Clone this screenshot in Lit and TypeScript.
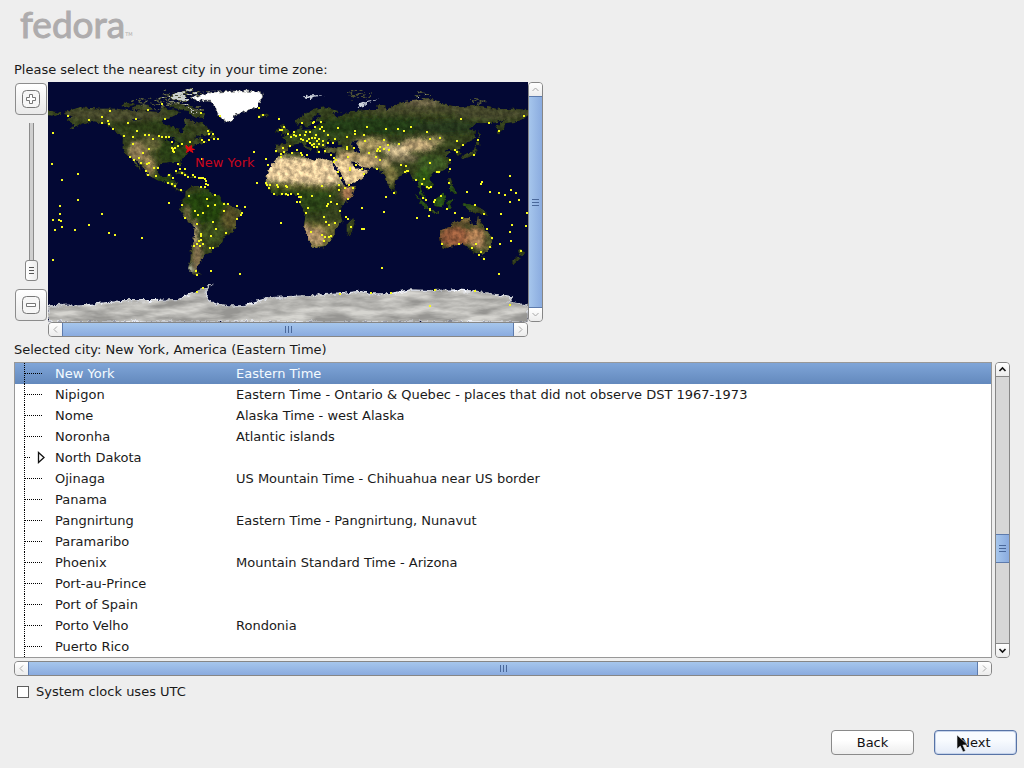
import { LitElement, html, svg, css } from "lit";
import { customElement, property, state } from "lit/decorators.js";
import { classMap } from "lit/directives/class-map.js";

/* Coastlines as "longitude,latitude" rings. */
const LAND: string[] = [
  "-168,66 -166,68 -156,71 -141,70 -128,70 -115,68 -108,68 -96,67.5 -94,72 -90,69 -85,69.5 -81,67 -87,64 -94,61 -94,58.5 -88,56.5 -82,55 -82,52 -79,51.5 -79,54.5 -77,57 -78,62 -73,62 -69,59 -65,60 -62,57 -56,52.5 -60,50 -66,50 -71,47 -65,49 -64,46 -60,46 -66,43.5 -70,43.5 -70,41.5 -74,40.5 -76,37 -76,35 -81,31.5 -80,26 -82,27 -83,30 -89,30 -94,29.5 -97,27.5 -97.5,22 -95,18.5 -91,18.5 -90,21 -87,21.5 -88,16 -83.5,15 -84,11 -81,9 -77.5,8.5 -80,7.5 -83,8.5 -86,11 -88,13 -94,16 -97,16 -105,20 -106,23 -110,27 -113,31 -115,31.5 -112,27 -109.5,23 -112,25 -115,29 -117.5,33.5 -121,35 -124,40 -124,47 -123,49 -128,51 -131,55 -136,58.5 -145,60.5 -151,59.5 -154,59 -158,56.5 -164,54.5 -160,58 -162,59 -166,62 -161,64.5",
  "-62,66 -64,63 -72,64.5 -74,68 -88,71 -88,73.5 -80,73.5 -72,71",
  "-117,70 -114,73 -105,73 -101,69.5 -108,68.5 -115,69",
  "-125,72 -122,74.5 -115,73 -122,71",
  "-59,48 -56,51.5 -53,47",
  "-85,22 -80,23.5 -74,20 -78,20",
  "-74,18 -72,20 -68.5,18.5",
  "-24,65.5 -16,66.3 -14,65 -19,63.4 -22,64",
  "-77,8 -72,12 -62,10.5 -57,6 -51,4.5 -50,0 -44,-2.5 -35,-6 -35,-9 -39,-13 -39,-18 -41,-22 -48,-26 -49,-29 -53,-34 -58,-35 -57,-38 -62,-39 -65,-42.5 -67,-46 -69,-51 -68,-53 -65,-55 -71,-54.5 -75,-50 -73,-42 -73,-37 -71,-30 -70,-18 -76,-14 -81,-6 -80,-3 -80,1 -77,4",
  "-6,35.8 10,37.3 11,34 20,31 23,33 33,31 35,27 37,21 43,11.5 51,12 48,4 41,-2 39,-7 41,-15 35,-20 35,-24 32,-29 27,-34 19,-34.5 15,-27 12,-18 13,-11 9,-1 9,4 4,6.5 -8,4.5 -13,8 -17,14 -16,20 -13,27.5 -9,32",
  "49,-12 50,-16 47,-25 44,-24 44,-17",
  "-9,37 -9,43 -1.5,43.5 -1,46 -4.5,48.5 1.5,50.5 5,53 8,54 8,57 10.5,57.5 11,54 20,54.5 22,57.5 24,59 30,60 22,60.5 21.5,63 25,65 22,66 17,61.5 18,59.5 16,56.5 13,55.5 11,59 7,58 5,61 13,66 20,70 28,71 41,67 33,66.5 38,64 44,66.5 46,68 60,69 68,69 67,72.5 73,72.5 73,68 78,72 87,75 100,76.5 105,78 113,75.5 114,73.5 130,71 140,72.5 160,69.5 170,70 180,69 180,65 177,62.5 170,60 163,59 162,55 157,51 156,57 163,62 155,59.5 142,59 135,54.5 141,53 140,48 132,43 128,40 129.5,36 126.5,34.5 126,38 121,39 118,39 122,37 119,35 122,31 120,26 115,22.5 108,21.5 106,18 109,12 105,9 101,13 99.5,10 103,4 103.5,1.3 100,5 98,10 98,16 94,16 91,22.5 87,21.5 80,15 80,10 77.5,8 73,17 72,21 67,25 57,26 54,27 50,30 48,30 51,25 56,26 60,22.5 55,17 45,13 43,14 39,21 35,28 34,31 36,36.5 27,37 27,40.5 41,41.5 37,45 39,47 34,44.5 31,46.5 28,43 29,41 23,40.5 24,38 22,36.5 19.5,41 13,45.5 13,43.5 18.5,40 16,38 10,44 3.5,43 -0.5,39 -2,37",
  "-180,69 -172,67 -170,66 -174,64.5 -180,65",
  "-5,50 1.5,51.5 0,53.5 -2,56 -3,58.5 -6,57.5 -4.5,54 -5,52",
  "-10,52 -6,52.5 -6,55 -9.5,54",
  "80,9.5 82,7 80,6",
  "130,32 136,34 140.5,35.5 142,40 140,41 139,38 132,35.5",
  "140,42 145,43.5 142,45.5",
  "142,46 144,50 143,54",
  "95,5.5 104,-2 106,-6 102,-4",
  "109,1 117,7 118.5,4 116,-4 110,-3",
  "105,-6 114,-7.5 114,-9 108,-7.8",
  "119,-5 120,1 125,1.5 121,-1 123,-5",
  "131,-1 138,-2 147,-6 150,-10.5 143,-8 138,-8 133,-4",
  "120,18 122,18 124,12 126,7 122,7.5 121,14",
  "120,23 122,25 121,22",
  "114,-22 114,-26 115.5,-34 118,-35 124,-33 131,-31.5 136,-35 140,-38 146,-39 150,-37.5 153,-32 153,-27 149,-21 146,-18.5 145,-15 142.5,-11 141,-17 139,-17.5 136,-15 136.5,-12 131,-12 129,-15 125,-14 122,-18",
  "145,-41 148,-41 147,-43.5",
  "173,-35 178,-38 175,-41.5 174,-39",
  "172,-41 174,-42 169,-46.5 167,-46",
];

const INLAND_WATER: string[] = [
  "47,45 53,46.5 51,44 53,41 54,37 50,37.5 49,40",
  "-92,47 -86,48.5 -84,46 -87,42 -88,45",
  "-84,45 -80,44 -82,43",
  "-83,42 -76,43.5 -79,42.5",
  "-118,62 -109,62.5 -115,61",
  "32,0 34,0 33,-2.5",
];

const ICE: string[] = [
  "-66,80 -58,82.3 -35,83.5 -20,82.5 -19,79 -21,75 -23,71 -32,68 -40,65 -43,60 -48,61 -53,66 -54,70 -58,75.5 -68,76 -73,78",
];

/* Rocky arctic islands with broken snow cover. */
const ARCTIC: string[] = [
  "-90,77 -88,80 -75,83 -62,82.5 -76,79 -80,76.5",
  "-95,75.5 -80,76 -80,74.5 -92,74.5",
  "-117,75.5 -106,76.5 -106,75",
  "-97,78 -92,81 -87,79",
  "-101,73 -96,74 -96,72",
  "-80,73 -70,71 -66,68 -72,69",
  "95,79 100,81 105,79",
  "137,76 150,75.5 140,75",
  "46,80.5 62,81 55,80",
];

const SNOWY_ISLES: string[] = [
  "52,71 54,73.5 60,76 69,77 60,75 56,72",
  "11,79 16,80 27,80.3 20,79 17,77",
];

const ANTARCTICA =
  "-180,-78 -150,-77 -130,-75 -126,-74 -100,-74 -82,-73 -75,-70 -68,-67 -58,-63 -62,-68 -60,-73 -56,-76 -45,-78 -34,-78 -25,-75 -14,-72 0,-71 20,-70 38,-69 54,-67 62,-69 75,-69 92,-66 108,-66.5 125,-66 142,-67 160,-70 168,-71 165,-75 180,-77.5 180,-90 -180,-90";

/* Vegetation and desert areas drawn as rings. */
const REGIONS: [string, string][] = [
  ["#e4c899", "-18,16 -17,30 -8,34 0,34 12,33 22,34 36,32 38,20 40,15 30,13 15,14 0,15"],
  ["#e3c693", "34,32 42,34 48,31 62,24 56,14 42,12"],
  ["#67672f", "-18,14 0,14 15,13 30,12 38,13 36,9 15,10 -15,11"],
  ["#2a4212", "-16,10 15,9 34,8 31,-4 26,-8 12,-7 8,3 -10,3"],
  ["#6b6733", "10,-14 22,-16 36,-15 42,-20 30,-36 14,-36"],
];

/* Softer patches: cx, cy, rx, ry (degrees), colour. */
const BIOMES: [number, number, number, number, string][] = [
  [-130, 66, 40, 5, "#45462a"],
  [-80, 60, 12, 5, "#43452a"],
  [-100, 56, 30, 5, "#2c3a18"],
  [-85, 38, 12, 11, "#2c4114"],
  [-112, 38, 8, 8, "#8d7a52"],
  [-104, 27, 4, 7, "#a08859"],
  [-103, 44, 7, 6, "#606035"],
  [-92, 16, 8, 5, "#2c4816"],
  [-62, -4, 18, 12, "#203f0e"],
  [-43, -12, 7, 9, "#544f25"],
  [-57, -24, 8, 7, "#3b4d1a"],
  [-68, -42, 4, 12, "#7c6a48"],
  [-70, -24, 2, 10, "#b9a276"],
  [-74, -51, 2, 4, "#b9b9b0"],
  [-76, -10, 2, 8, "#6f6540"],
  [45, 7, 5, 6, "#a5764f"],
  [22, -26, 6, 7, "#a98d63"],
  [14, -24, 3, 7, "#b79470"],
  [46, 35, 9, 3, "#b59a69"],
  [34, 39, 7, 2, "#6c6a3e"],
  [-4, 40, 4, 2, "#6d6235"],
  [60, 31, 9, 6, "#b59c6e"],
  [62, 43, 14, 5, "#a6945f"],
  [82, 39, 11, 4, "#d0bb8f"],
  [86, 33, 12, 3, "#7d7252"],
  [98, 43, 13, 5, "#b8a073"],
  [110, 46, 7, 3, "#968b5a"],
  [72, 29, 5, 4, "#a39263"],
  [77, 20, 5, 7, "#77713d"],
  [108, 29, 11, 6, "#3a5720"],
  [102, 17, 7, 8, "#2f5418"],
  [20, 50, 26, 6, "#33471a"],
  [65, 57, 50, 6, "#243a12"],
  [120, 56, 26, 5, "#28381a"],
  [105, 70, 50, 4, "#474a2b"],
  [100, 75, 14, 2, "#776b4f"],
  [155, 66, 30, 4, "#45462a"],
  [115, 3, 30, 10, "#285015"],
  [125, -26, 12, 8, "#935a3a"],
  [141, -26, 7, 7, "#a87950"],
  [143, -31, 4, 4, "#b98d62"],
  [149, -30, 3, 12, "#5d5c33"],
  [134, -14, 12, 3, "#6e5a34"],
];

/* City markers, in map pixels (480 x 240). */
const CITIES =
  "20,34 5,51 54,35 62,29 60,39 54,41 61,42 41,38 65,47 80,41 88,37 100,28 114,22 117,37 76,54 89,49 85,55 97,53 101,53 105,57 111,54 114,55 118,55 85,62 101,67 95,71 82,75 86,78 91,76 93,81 99,82 101,81 106,86 110,86 98,89 100,93 108,94 121,93 120,101 121,121 4,82 14,98 30,92 30,118 12,124 " +
  "153,31 172,34 211,26 211,35 215,33 231,37 121,55 124,60 160,49 161,52 165,52 166,57 170,57 161,58 154,58 156,60 142,60 134,62 130,64 124,66 125,67 126,70 125,69 127,66 154,77 206,70 218,77 220,83 130,82 132,87 137,87 128,89 125,96 134,91 137,93 140,95 145,93 147,95 151,96 153,96 155,96 157,97 158,99 158,102 160,103 157,105 153,105 124,102 127,104 133,108 141,114 159,117 167,113 176,122 160,124 167,123 180,122 189,124 197,125 209,101 134,123 218,101 219,103 222,103 221,106 226,112 230,105 239,105 238,112 " +
  "232,48 234,48 236,45 254,41 265,41 266,40 273,40 274,45 267,45 290,46 307,49 307,52 319,45 338,47 350,47 356,49 299,55 316,53 280,53 276,49 272,47 258,50 262,50 246,50 240,52 243,55 246,53 248,54 252,53 253,57 255,58 257,53 259,59 261,57 262,61 264,63 264,56 267,56 268,53 271,57 269,59 266,62 266,65 269,65 271,62 271,70 275,63 275,59 242,64 235,66 228,69 236,70 233,72 233,75 244,71 253,71 254,73 259,73 249,68 280,61 285,61 287,57 277,69 283,73 286,76 286,80 288,78 299,65 299,67 306,66 300,75 302,86 302,88 308,83 314,87 316,92 290,90 293,96 291,103 291,108 297,106 301,103 305,106 300,117 317,59 336,58 332,65 330,67 332,69 329,69 336,67 340,63 341,68 321,71 328,75 329,87 332,78 351,62 353,83 358,84 359,89 346,111 338,115 314,126 " +
  "229,103 238,104 234,112 240,113 243,112 250,112 251,115 253,115 249,120 252,120 264,114 260,126 282,114 283,120 280,122 279,124 289,122 274,104 363,45 379,50 382,57 392,56 413,37 441,41 451,49 476,34 409,59 415,63 407,68 409,70 426,73 430,58 402,78 402,87 382,81 391,90 389,90 401,101 376,97 374,102 379,105 381,106 383,105 368,98 360,89 357,90 375,116 378,118 387,118 386,120 393,114 399,127 382,127 427,123 419,110 433,102 434,100 442,110 451,111 457,113 463,108 468,111 471,118 462,120 462,94 " +
  "12,132 5,138 11,138 13,139 14,145 7,148 27,148 41,143 54,132 61,151 67,153 94,156 5,178 192,192 147,129 150,133 155,131 176,129 194,131 193,133 189,137 137,136 149,142 165,140 168,147 163,154 178,151 153,152 153,154 153,158 151,159 149,162 146,164 152,164 155,162 162,166 165,166 148,189 163,189 149,193 155,206 149,210 " +
  "233,141 258,131 292,129 276,135 278,140 281,143 287,141 298,135 300,137 303,145 314,147 316,147 336,130 263,150 274,153 277,155 281,155 283,154 276,159 334,186 369,136 381,134 382,128 407,131 414,136 436,132 453,132 479,131 464,143 478,144 462,150 463,159 452,162 439,147 444,156 442,165 433,170 431,173 436,177 424,166 428,162 411,162 394,162 473,169 451,192 387,208 427,209 343,211 323,211 292,212 382,224 462,223";

const ring = (points: string) => "M" + points.split(" ").join("L") + "Z";
const rings = (list: string[]) => list.map(ring).join("");
const cityPath = CITIES.split(" ")
  .map((p) => {
    const [x, y] = p.split(",").map(Number);
    return `M${x - 1} ${y - 1}h2v2h-2z`;
  })
  .join("");

@customElement("world-map")
class WorldMap extends LitElement {
  @property() city = "";

  static styles = css`
    :host {
      display: block;
      background: #030834;
    }
    svg {
      display: block;
      width: 100%;
    }
    .label {
      font: 13px "DejaVu Sans", sans-serif;
      fill: #c8061c;
    }
  `;

  render() {
    return html`<svg viewBox="0 0 480 240" role="img" aria-label="World map">
      ${svg`
      <defs>
        <filter id="terrain" x="0" y="0" width="480" height="240" filterUnits="userSpaceOnUse" color-interpolation-filters="sRGB">
          <feTurbulence type="fractalNoise" baseFrequency="0.3" numOctaves="3" seed="7" result="n" />
          <feDisplacementMap in="SourceGraphic" in2="n" scale="4" xChannelSelector="R" yChannelSelector="G" result="d" />
          <feTurbulence type="fractalNoise" baseFrequency="0.2" numOctaves="4" seed="3" />
          <feColorMatrix values="2 0 0 0 -0.5  2 0 0 0 -0.5  2 0 0 0 -0.5  0 0 0 0 1" result="g" />
          <feComposite in="d" in2="g" operator="arithmetic" k1="0.45" k2="0.78" />
        </filter>
        <filter id="snow" x="0" y="0" width="480" height="240" filterUnits="userSpaceOnUse" color-interpolation-filters="sRGB">
          <feTurbulence type="fractalNoise" baseFrequency="0.2" numOctaves="3" seed="11" result="n" />
          <feDisplacementMap in="SourceGraphic" in2="n" scale="6" xChannelSelector="R" yChannelSelector="G" result="d" />
          <feTurbulence type="fractalNoise" baseFrequency="0.03 0.12" numOctaves="4" seed="5" />
          <feColorMatrix values="2 0 0 0 -0.5  2 0 0 0 -0.5  2 0 0 0 -0.5  0 0 0 0 1" result="g" />
          <feComposite in="d" in2="g" operator="arithmetic" k1="0.35" k2="0.82" />
        </filter>
        <filter id="broken" x="0" y="0" width="480" height="240" filterUnits="userSpaceOnUse" color-interpolation-filters="sRGB">
          <feTurbulence type="fractalNoise" baseFrequency="0.12 0.3" numOctaves="3" seed="2" result="n" />
          <feDisplacementMap in="SourceGraphic" in2="n" scale="18" xChannelSelector="R" yChannelSelector="G" />
        </filter>
        <filter id="ragged" x="0" y="0" width="480" height="240" filterUnits="userSpaceOnUse" color-interpolation-filters="sRGB">
          <feTurbulence type="fractalNoise" baseFrequency="0.3" numOctaves="2" seed="4" result="n" />
          <feDisplacementMap in="SourceGraphic" in2="n" scale="5" xChannelSelector="R" yChannelSelector="G" />
        </filter>
        <filter id="soft"><feGaussianBlur stdDeviation="1.4" /></filter>
        <clipPath id="coast"><path d=${rings(LAND)} /></clipPath>
      </defs>
      <rect width="480" height="240" fill="#030834" />
      <g filter="url(#terrain)">
        <g transform="translate(240 120) scale(1.33333 -1.33333)">
          <g clip-path="url(#coast)">
            <rect x="-180" y="-90" width="360" height="180" fill="#34401d" />
            <g filter="url(#soft)">
              ${REGIONS.map(([fill, points]) => svg`<path d=${ring(points)} fill=${fill} />`)}
              ${BIOMES.map(([x, y, rx, ry, fill]) => svg`<ellipse cx=${x} cy=${y} rx=${rx} ry=${ry} fill=${fill} />`)}
            </g>
            <path d=${rings(INLAND_WATER)} fill="#030834" />
          </g>
          <path d="M33 29L39 21L43 12.500" fill="none" stroke="#030834" stroke-width="2" />
          <path d="M48 30L51 26.500L57 25" fill="none" stroke="#030834" stroke-width="2" />
        </g>
      </g>
      <g filter="url(#broken)">
        <g transform="translate(240 120) scale(1.33333 -1.33333)">
          <path d=${rings(ARCTIC)} fill="#c9cecd" stroke="#4e5234" stroke-width="1" />
        </g>
      </g>
      <g filter="url(#snow)">
        <g transform="translate(240 120) scale(1.33333 -1.33333)">
          <path d=${ring(ANTARCTICA)} fill="#b7b6b2" stroke="#d3d6de" stroke-width="1" />
        </g>
      </g>
      <g filter="url(#ragged)">
        <g transform="translate(240 120) scale(1.33333 -1.33333)">
          <path d=${rings(ICE)} fill="#ffffff" stroke="#6d6f60" stroke-width="0.500" />
          <path d=${rings(SNOWY_ISLES)} fill="#cfd5dc" />
        </g>
      </g>
      <path d=${cityPath} fill="#f6fb1e" shape-rendering="crispEdges" />
      <path d="M138 63l2.500 2.500 3-2v3l3 1h-3l1.500 3-3.500-2-3 2 1-3-1.500-2z" fill="#e00a12" stroke="#e00a12" />
      <text class="label" x="147" y="85">${this.city}</text>
      `}
    </svg>`;
  }
}

@customElement("scroll-bar")
class ScrollBar extends LitElement {
  @property({ type: Boolean, reflect: true }) vertical = false;
  @property({ type: Boolean, reflect: true }) idle = false;
  @property({ type: Number }) start = 0;
  @property({ type: Number }) size = 100;

  static styles = css`
    :host {
      display: flex;
      box-sizing: border-box;
      height: 15px;
      border: 1px solid #868686;
      border-radius: 4px;
      background: #d6d6d6;
      overflow: hidden;
    }
    :host([vertical]) {
      flex-direction: column;
      width: 15px;
      height: auto;
    }
    button {
      flex: none;
      display: grid;
      place-items: center;
      box-sizing: border-box;
      width: 13px;
      height: 13px;
      padding: 0;
      border: 0;
      background: linear-gradient(#ffffff, #ececec);
      color: #111111;
    }
    :host([vertical]:not([idle])) button {
      height: 14px;
    }
    :host([vertical]:not([idle])) button:first-of-type {
      border-bottom: 1px solid #868686;
    }
    :host([vertical]:not([idle])) button:last-of-type {
      border-top: 1px solid #868686;
    }
    button svg {
      display: block;
      fill: none;
      stroke: currentColor;
      stroke-width: 1.6;
    }
    :host([idle]) button {
      color: #a9a9a9;
    }
    :host([idle]) button svg {
      stroke-width: 1;
    }
    .track {
      flex: 1;
      display: flex;
      min-width: 0;
      min-height: 0;
    }
    :host([vertical]) .track {
      flex-direction: column;
    }
    .thumb {
      display: flex;
      align-items: center;
      justify-content: center;
      box-sizing: border-box;
      border: solid #5d7bad;
      border-width: 0 1px;
      background: linear-gradient(#a6c6ec, #8aabdf);
    }
    :host([vertical]) .thumb {
      border-width: 1px 0;
      background: linear-gradient(90deg, #a6c6ec, #8aabdf);
    }
    .grip {
      width: 7px;
      height: 7px;
      background: repeating-linear-gradient(90deg, #4a689a 0 1px, transparent 1px 3px);
    }
    :host([vertical]) .grip {
      background: repeating-linear-gradient(#4a689a 0 1px, transparent 1px 3px);
    }
  `;

  render() {
    const back = this.vertical ? "M1.500 6l3-3 3 3" : "M6 1.500l-3 3 3 3";
    const forward = this.vertical ? "M1.500 3l3 3 3-3" : "M3 1.500l3 3-3 3";
    const side = this.vertical ? "height" : "width";
    return html`
      <button aria-label="Scroll back"><svg width="9" height="9"><path d=${back} /></svg></button>
      <div class="track">
        <div style="${side}:${this.start}%"></div>
        <div class="thumb" style="${side}:${this.size}%"><span class="grip"></span></div>
      </div>
      <button aria-label="Scroll forward"><svg width="9" height="9"><path d=${forward} /></svg></button>
    `;
  }
}

interface Zone {
  name: string;
  note?: string;
  group?: boolean;
}

const ZONES: Zone[] = [
  { name: "New York", note: "Eastern Time" },
  { name: "Nipigon", note: "Eastern Time - Ontario & Quebec - places that did not observe DST 1967-1973" },
  { name: "Nome", note: "Alaska Time - west Alaska" },
  { name: "Noronha", note: "Atlantic islands" },
  { name: "North Dakota", group: true },
  { name: "Ojinaga", note: "US Mountain Time - Chihuahua near US border" },
  { name: "Panama" },
  { name: "Pangnirtung", note: "Eastern Time - Pangnirtung, Nunavut" },
  { name: "Paramaribo" },
  { name: "Phoenix", note: "Mountain Standard Time - Arizona" },
  { name: "Port-au-Prince" },
  { name: "Port of Spain" },
  { name: "Porto Velho", note: "Rondonia" },
  { name: "Puerto Rico" },
];

@customElement("app-root")
class AppRoot extends LitElement {
  @state() private selected = 0;

  static styles = css`
    :host {
      display: flex;
      flex-direction: column;
      box-sizing: border-box;
      min-height: 100vh;
      background: #eeeeee;
      color: #1a1a1a;
      font: 13px/21px "DejaVu Sans", sans-serif;
    }
    header {
      display: flex;
      align-items: flex-end;
      box-sizing: border-box;
      height: 59px;
      padding: 0 20px 12px;
      color: #aeacad;
    }
    .logo {
      font: 400 37px/46px Lato, sans-serif;
      -webkit-text-stroke: 1px #aeacad;
    }
    .tm {
      font: 5px/26px "DejaVu Sans", sans-serif;
    }
    main {
      display: flex;
      flex-direction: column;
      padding: 0 14px;
    }
    .prompt {
      margin-bottom: 2px;
    }
    .chooser {
      display: grid;
      grid-template-columns: 34px minmax(0, 480px) 15px;
      grid-template-rows: auto 15px;
    }
    .zoom {
      display: flex;
      flex-direction: column;
      align-items: center;
      gap: 8px;
      padding: 1px 0;
    }
    .zoom button {
      flex: none;
      display: grid;
      place-items: center;
      box-sizing: border-box;
      width: 32px;
      height: 32px;
      padding: 0;
      border: 1px solid #8c8c8c;
      border-radius: 4px;
      background: linear-gradient(#ffffff, #e9e9e9);
    }
    .zoom svg {
      display: block;
      fill: #f6f6f6;
      stroke: #777777;
    }
    .zoom input {
      flex: 1;
      min-height: 0;
      width: 13px;
      margin: 0;
      writing-mode: vertical-lr;
      direction: rtl;
      appearance: none;
      background: linear-gradient(90deg, #8b8b8b 1px, #cfcfcf 1px 4px, #8b8b8b 4px) center / 5px 100% no-repeat;
    }
    .zoom input::-webkit-slider-thumb {
      appearance: none;
      box-sizing: border-box;
      width: 13px;
      height: 21px;
      border: 1px solid #858585;
      border-radius: 3px;
      background:
        repeating-linear-gradient(#555555 0 1px, transparent 1px 3px) center / 5px 7px no-repeat,
        linear-gradient(90deg, #ffffff, #ececec);
    }
    .across {
      grid-column: 2;
    }
    .choice {
      margin: 2px 0;
    }
    .list {
      display: grid;
      grid-template-columns: minmax(0, 1fr) 15px;
      gap: 3px;
    }
    .frame {
      border: 1px solid #989898;
      background: #ffffff;
      overflow: hidden;
    }
    table {
      width: 100%;
      border-collapse: collapse;
      table-layout: fixed;
    }
    .names {
      width: 221px;
    }
    td {
      height: 21px;
      padding: 0;
      white-space: nowrap;
      text-align: left;
    }
    .name {
      position: relative;
      padding-left: 40px;
      background:
        repeating-linear-gradient(#000000 0 1px, transparent 1px 2px) 9px 0 / 1px 100% no-repeat,
        repeating-linear-gradient(90deg, #000000 0 1px, transparent 1px 2px) 10px 10px / 18px 1px no-repeat;
    }
    .group .name {
      background:
        repeating-linear-gradient(#000000 0 1px, transparent 1px 2px) 9px 0 / 1px 100% no-repeat,
        repeating-linear-gradient(90deg, #000000 0 1px, transparent 1px 2px) 10px 10px / 6px 1px no-repeat;
    }
    .expander {
      position: absolute;
      left: 22px;
      top: 4px;
      fill: #ffffff;
      stroke: #111111;
      stroke-width: 1.3;
    }
    .chosen {
      background: linear-gradient(#7fa5d8, #6389bd);
      color: #f4fbff;
    }
    .utc {
      display: flex;
      align-items: center;
      align-self: flex-start;
      gap: 7px;
      margin-top: 5px;
      padding-left: 3px;
    }
    .utc input {
      appearance: none;
      box-sizing: border-box;
      width: 12px;
      height: 12px;
      margin: 0;
      border: 1px solid #5e5e5e;
      background: #ffffff;
    }
    footer {
      display: flex;
      justify-content: flex-end;
      gap: 20px;
      margin-top: auto;
      padding: 0 7px 13px;
    }
    footer button {
      position: relative;
      box-sizing: border-box;
      width: 83px;
      height: 25px;
      padding: 0;
      border: 1px solid #8a8a8a;
      border-radius: 4px;
      background: linear-gradient(#ffffff 40%, #ededed);
      color: #111111;
      font: inherit;
    }
    footer .primary {
      border: 1px solid #5773a6;
      background: linear-gradient(#f8fbff 40%, #e4ebf7);
      box-shadow: inset 0 0 0 1px #c5d3ea;
    }
    .pointer {
      position: absolute;
      left: 21px;
      top: 3px;
    }
  `;

  render() {
    const city = ZONES[this.selected];
    return html`
      <header><span class="logo">fedora</span><span class="tm">TM</span></header>
      <main>
        <div class="prompt">Please select the nearest city in your time zone:</div>
        <div class="chooser">
          <div class="zoom">
            <button aria-label="Zoom in">
              <svg width="18" height="18">
                <rect x="0.500" y="0.500" width="17" height="17" rx="4" />
                <path d="M7.500 4.500h3v3h3v3h-3v3h-3v-3h-3v-3h3z" fill="#ffffff" />
              </svg>
            </button>
            <input type="range" min="0" max="10" value="0" aria-label="Zoom" />
            <button aria-label="Zoom out">
              <svg width="18" height="18">
                <rect x="0.500" y="0.500" width="17" height="17" rx="4" />
                <path d="M4.500 7.500h9v3h-9z" fill="#ffffff" />
              </svg>
            </button>
          </div>
          <world-map .city=${city.name}></world-map>
          <scroll-bar vertical idle></scroll-bar>
          <scroll-bar class="across" idle></scroll-bar>
        </div>
        <div class="choice">Selected city: New York, America (Eastern Time)</div>
        <div class="list">
          <div class="frame">
            <table aria-label="Time zones">
              <colgroup><col class="names" /><col /></colgroup>
              <tbody>
                ${ZONES.map(
                  (z, i) => html`<tr class=${classMap({ chosen: i === this.selected, group: !!z.group })}>
                    <td class="name">
                      ${z.group
                        ? html`<svg class="expander" width="9" height="13"><path d="M1.500 1.500L7 6.500 1.500 11.500z" /></svg>`
                        : ""}${z.name}
                    </td>
                    <td>${z.note ?? ""}</td>
                  </tr>`
                )}
              </tbody>
            </table>
          </div>
          <scroll-bar vertical .start=${59} .size=${11}></scroll-bar>
          <scroll-bar idle></scroll-bar>
        </div>
        <label class="utc"><input type="checkbox" />System clock uses UTC</label>
      </main>
      <footer>
        <button>Back</button>
        <button class="primary">
          Next
          <svg class="pointer" width="14" height="20" viewBox="0 0 14 20">
            <path d="M1 1v14l3.300-3 2.700 6 2.500-1.200-2.700-5.800H12z" fill="#0a0a0a" stroke="#e8ecf4" stroke-width="0.600" />
          </svg>
        </button>
      </footer>
    `;
  }
}
